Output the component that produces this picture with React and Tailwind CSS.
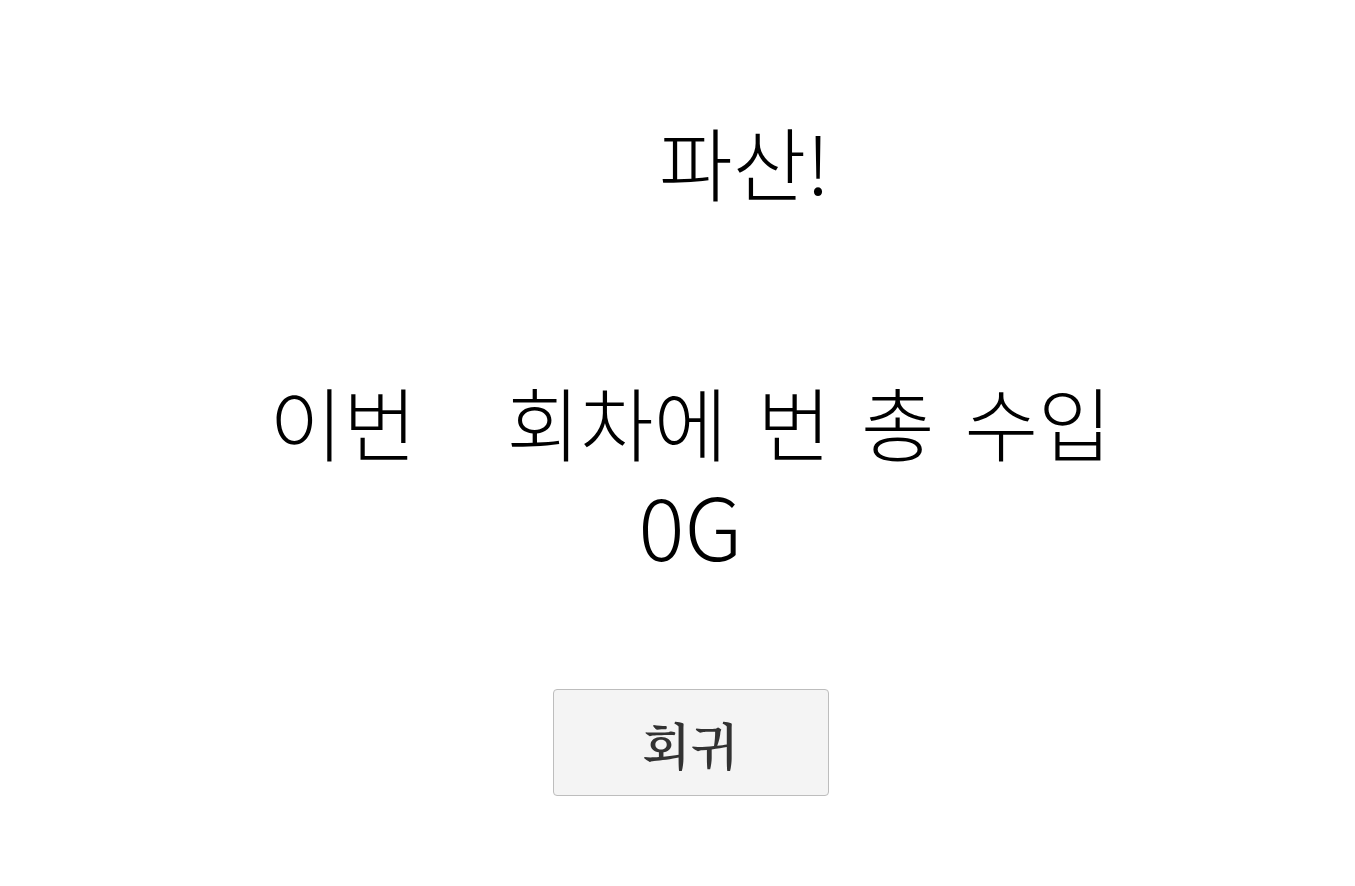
export default function App() {
  return (
    <main className="flex min-h-screen flex-col items-center bg-white pl-[26px] pt-[108px] font-['Noto_Sans_CJK_KR',sans-serif] text-black">
      <h1 className="pl-[108px] text-[80px] font-light leading-[104px]">파산!</h1>
      <section className="mt-[156px] text-center font-light leading-[104px]">
        <p className="flex flex-wrap justify-center gap-x-[30px] text-[80px]">
          <span className="mr-[60px]">이번 </span>
          <span>회차에 </span>
          <span>번 </span>
          <span>총 </span>
          <span>수입</span>
        </p>
        <p className="text-[86px]">0G</p>
      </section>
      <button
        type="button"
        className="mt-[113px] h-[107px] w-[276px] rounded-[4px] border border-[#bdbdbd] bg-[#f4f4f4] font-['Noto_Serif_CJK_KR','Noto_Sans_CJK_KR',serif] text-[50px] font-semibold leading-none text-[#323232]"
      >
        회귀
      </button>
    </main>
  );
}
